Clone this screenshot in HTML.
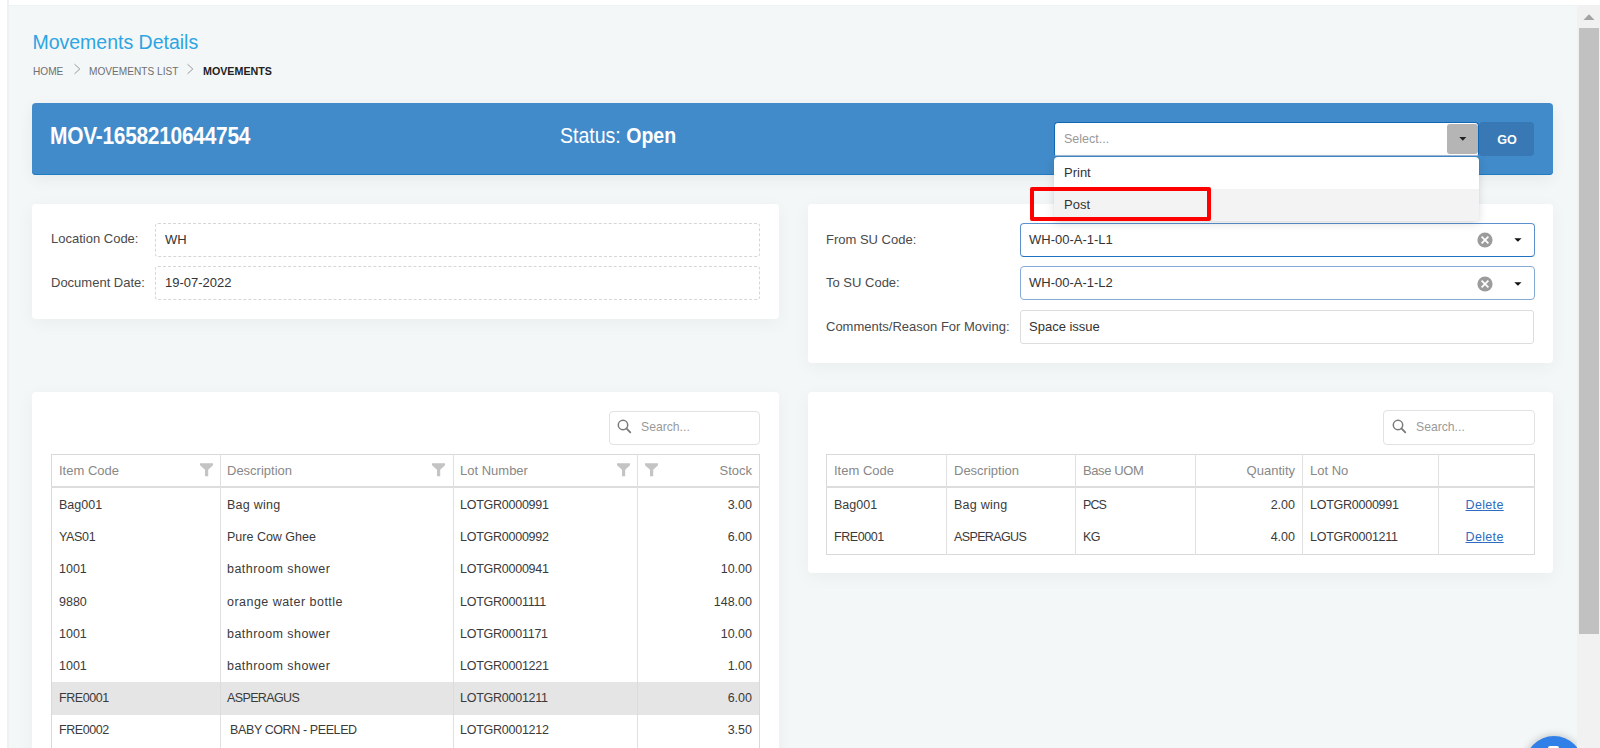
<!DOCTYPE html>
<html><head><meta charset="utf-8">
<style>
*{box-sizing:border-box;margin:0;padding:0}
html,body{width:1600px;height:748px;overflow:hidden}
body{position:relative;background:#f4f7f8;font-family:"Liberation Sans",sans-serif;color:#3a3a3a}
.abs{position:absolute}
.t{position:absolute;white-space:nowrap;line-height:1}
#lstrip{left:0;top:0;width:9px;height:748px;background:#fff;border-right:2px solid #eff0f2}
#tstrip{left:9px;top:0;width:1591px;height:5px;background:#fff;box-shadow:0 1px 1px rgba(0,0,0,.015)}
#sb{left:1577px;top:5px;width:23px;height:743px;background:#f1f1f1}
#sbthumb{left:1579px;top:28px;width:20px;height:606px;background:#c1c1c1}
.card{position:absolute;background:#fff;border-radius:4px;box-shadow:0 4px 18px rgba(0,0,0,.045)}
.title{left:32.4px;top:32.5px;font-size:19.5px;color:#2da5e2}
.bc{top:65.8px;font-size:11.5px;color:#6f6f6f;transform:scaleX(0.88);transform-origin:0 0}
#hdr{left:32px;top:103px;width:1521px;height:72px;background:#418bca;border-radius:4px;box-shadow:inset 0 -1px 0 #1f7bc4,0 4px 16px rgba(0,0,0,.06)}
.lbl{font-size:13px;color:#4a4a4a}
.inp{position:absolute;background:#fff;border-radius:3px}
.dash{border:1px dashed #d6d6d6}
.blue{border:1px solid #5d8fc9}
.gray{border:1px solid #ddd}
.val{font-size:13px;color:#333}
table{border-collapse:collapse;position:absolute}
</style></head><body>
<div id="lstrip" class="abs"></div>
<div id="tstrip" class="abs"></div>

<div class="t title">Movements Details</div>
<div class="t bc" style="left:32.5px">HOME</div>
<div class="t bc" style="left:89.2px">MOVEMENTS LIST</div>
<div class="t bc" style="left:203px;color:#222;font-weight:bold;transform:scaleX(0.93)">MOVEMENTS</div>

<div id="hdr" class="abs"></div>
<div class="t" style="left:50.2px;top:125px;font-size:23px;font-weight:bold;color:#fff;letter-spacing:-0.3px;transform:scaleX(0.91);transform-origin:0 0">MOV-1658210644754</div>
<div class="t" style="left:560px;top:125px;font-size:22.5px;color:#fff;transform:scaleX(0.868);transform-origin:0 0">Status: <b>Open</b></div>


<!-- select -->
<div class="abs" style="left:1054px;top:122px;width:425px;height:34px;background:#fff;border-radius:4px 4px 2px 2px;border:1px solid #1167b3;border-bottom-color:#a3b9d6"></div>
<div class="t" style="left:1064px;top:133px;font-size:12.5px;color:#999">Select...</div>
<div class="abs" style="left:1447px;top:124px;width:31px;height:30px;background:#b5b5b5;border-radius:3px"></div>
<svg class="abs" style="left:1458.5px;top:137px" width="8" height="4" viewBox="0 0 8 4"><path d="M0.3 0.1H7.3L3.8 3.7Z" fill="#222"/></svg>
<div class="abs" style="left:1479px;top:122px;width:55px;height:34px;background:#3778b5;border-radius:4px"></div>
<div class="t" style="left:1497.3px;top:133.5px;font-size:12.6px;color:#fff;font-weight:bold">GO</div>

<!-- card1 -->
<div class="card" style="left:32px;top:204px;width:747px;height:115px"></div>
<div class="t lbl" style="left:51px;top:232.3px">Location Code:</div>
<div class="inp dash" style="left:155px;top:223px;width:605px;height:34px"></div>
<div class="t val" style="left:165px;top:232.5px">WH</div>
<div class="t lbl" style="left:51px;top:276px">Document Date:</div>
<div class="inp dash" style="left:155px;top:266px;width:605px;height:34px"></div>
<div class="t val" style="left:165px;top:276px">19-07-2022</div>

<!-- card2 -->
<div class="card" style="left:808px;top:204px;width:745px;height:159px"></div>
<div class="t lbl" style="left:826px;top:233px">From SU Code:</div>
<div class="inp" style="left:1020px;top:223px;width:515px;height:34px;border:1px solid #5b90cf;border-bottom-color:#1f72c0;border-radius:4px"></div>
<div class="t val" style="left:1029px;top:233px">WH-00-A-1-L1</div>
<div class="t lbl" style="left:826px;top:276px">To SU Code:</div>
<div class="inp" style="left:1020px;top:266px;width:515px;height:34px;border:1px solid #86aad6;border-radius:4px"></div>
<div class="t val" style="left:1029px;top:276px">WH-00-A-1-L2</div>
<div class="t lbl" style="left:826px;top:320px">Comments/Reason For Moving:</div>
<div class="inp gray" style="left:1020px;top:310px;width:514px;height:34px"></div>
<div class="t val" style="left:1029px;top:320px">Space issue</div>

<!-- card3 -->
<div class="card" style="left:32px;top:392px;width:747px;height:400px"></div>
<!-- card4 -->
<div class="card" style="left:808px;top:392px;width:745px;height:181px"></div>


<!-- table1 -->
<div class="abs" style="left:608.5px;top:410.5px;width:151.5px;height:34.5px;border:1px solid #e2e2e2;border-radius:4px;background:#fff"></div>
<svg class="abs" style="left:617px;top:419px" width="15" height="15" viewBox="0 0 15 15"><circle cx="6" cy="6" r="4.7" fill="none" stroke="#7a7a7a" stroke-width="1.5"/><path d="M9.4 9.4L13.3 13.3" stroke="#7a7a7a" stroke-width="1.8" stroke-linecap="round"/></svg>
<div class="t" style="left:641px;top:421px;font-size:12.2px;color:#9a9a9a">Search...</div>
<div class="abs" style="left:51px;top:454px;width:709px;height:400px;border:1px solid #d9d9d9;border-bottom:none"></div>
<div class="abs" style="left:51px;top:486px;width:709px;height:2px;background:#dddddd"></div>
<div class="abs" style="left:220px;top:454px;width:1px;height:400px;background:#e0e0e0"></div>
<div class="abs" style="left:453px;top:454px;width:1px;height:400px;background:#e0e0e0"></div>
<div class="abs" style="left:637px;top:454px;width:1px;height:400px;background:#e0e0e0"></div>
<div class="abs" style="left:52px;top:682.2px;width:707px;height:32.4px;background:#e5e5e5"></div>
<div class="abs" style="left:220px;top:682.2px;width:1px;height:32.4px;background:#dcdcdc"></div>
<div class="abs" style="left:453px;top:682.2px;width:1px;height:32.4px;background:#dcdcdc"></div>
<div class="abs" style="left:637px;top:682.2px;width:1px;height:32.4px;background:#dcdcdc"></div>
<div class="t" style="left:59px;top:464px;font-size:13px;color:#888">Item Code</div>
<div class="t" style="left:227px;top:464px;font-size:13px;color:#888">Description</div>
<div class="t" style="left:460px;top:464px;font-size:13px;color:#888">Lot Number</div>
<div class="t" style="right:848px;top:464px;font-size:13px;color:#888">Stock</div>
<svg class="abs" style="left:200px;top:462.5px" width="14" height="14" viewBox="0 0 14 14"><path d="M0 0.3H13V2.3L8.2 6.8V13.3H5V6.8L0 2.3Z" fill="#c4c4c4"/></svg>
<svg class="abs" style="left:432px;top:462.5px" width="14" height="14" viewBox="0 0 14 14"><path d="M0 0.3H13V2.3L8.2 6.8V13.3H5V6.8L0 2.3Z" fill="#c4c4c4"/></svg>
<svg class="abs" style="left:617px;top:462.5px" width="14" height="14" viewBox="0 0 14 14"><path d="M0 0.3H13V2.3L8.2 6.8V13.3H5V6.8L0 2.3Z" fill="#c4c4c4"/></svg>
<svg class="abs" style="left:645px;top:462.5px" width="14" height="14" viewBox="0 0 14 14"><path d="M0 0.3H13V2.3L8.2 6.8V13.3H5V6.8L0 2.3Z" fill="#c4c4c4"/></svg>
<div class="t" style="left:59px;top:499.0px;font-size:12.5px">Bag001</div>
<div class="t" style="left:227px;top:499.0px;font-size:12.5px;letter-spacing:0.25px">Bag wing</div>
<div class="t" style="left:460px;top:499.0px;font-size:12.5px;letter-spacing:-0.25px">LOTGR0000991</div>
<div class="t" style="right:848px;top:499.0px;font-size:12.5px">3.00</div>
<div class="t" style="left:59px;top:531.2px;font-size:12.5px;letter-spacing:-0.35px">YAS01</div>
<div class="t" style="left:227px;top:531.2px;font-size:12.5px">Pure Cow Ghee</div>
<div class="t" style="left:460px;top:531.2px;font-size:12.5px;letter-spacing:-0.25px">LOTGR0000992</div>
<div class="t" style="right:848px;top:531.2px;font-size:12.5px">6.00</div>
<div class="t" style="left:59px;top:563.4px;font-size:12.5px">1001</div>
<div class="t" style="left:227px;top:563.4px;font-size:12.5px;letter-spacing:0.45px">bathroom shower</div>
<div class="t" style="left:460px;top:563.4px;font-size:12.5px;letter-spacing:-0.25px">LOTGR0000941</div>
<div class="t" style="right:848px;top:563.4px;font-size:12.5px">10.00</div>
<div class="t" style="left:59px;top:595.6px;font-size:12.5px">9880</div>
<div class="t" style="left:227px;top:595.6px;font-size:12.5px;letter-spacing:0.47px">orange water bottle</div>
<div class="t" style="left:460px;top:595.6px;font-size:12.5px;letter-spacing:-0.25px">LOTGR0001111</div>
<div class="t" style="right:848px;top:595.6px;font-size:12.5px">148.00</div>
<div class="t" style="left:59px;top:627.8px;font-size:12.5px">1001</div>
<div class="t" style="left:227px;top:627.8px;font-size:12.5px;letter-spacing:0.45px">bathroom shower</div>
<div class="t" style="left:460px;top:627.8px;font-size:12.5px;letter-spacing:-0.25px">LOTGR0001171</div>
<div class="t" style="right:848px;top:627.8px;font-size:12.5px">10.00</div>
<div class="t" style="left:59px;top:660.0px;font-size:12.5px">1001</div>
<div class="t" style="left:227px;top:660.0px;font-size:12.5px;letter-spacing:0.45px">bathroom shower</div>
<div class="t" style="left:460px;top:660.0px;font-size:12.5px;letter-spacing:-0.25px">LOTGR0001221</div>
<div class="t" style="right:848px;top:660.0px;font-size:12.5px">1.00</div>
<div class="t" style="left:59px;top:692.2px;font-size:12.5px;letter-spacing:-0.43px">FRE0001</div>
<div class="t" style="left:227px;top:692.2px;font-size:12.5px;letter-spacing:-0.62px">ASPERAGUS</div>
<div class="t" style="left:460px;top:692.2px;font-size:12.5px;letter-spacing:-0.25px">LOTGR0001211</div>
<div class="t" style="right:848px;top:692.2px;font-size:12.5px">6.00</div>
<div class="t" style="left:59px;top:724.4px;font-size:12.5px;letter-spacing:-0.43px">FRE0002</div>
<div class="t" style="left:227px;top:724.4px;font-size:12.5px;letter-spacing:-0.4px">&nbsp;BABY CORN - PEELED</div>
<div class="t" style="left:460px;top:724.4px;font-size:12.5px;letter-spacing:-0.25px">LOTGR0001212</div>
<div class="t" style="right:848px;top:724.4px;font-size:12.5px">3.50</div>
<!-- table2 -->
<div class="abs" style="left:1383.3px;top:410.3px;width:151.5px;height:34.5px;border:1px solid #e2e2e2;border-radius:4px;background:#fff"></div>
<svg class="abs" style="left:1392px;top:419px" width="15" height="15" viewBox="0 0 15 15"><circle cx="6" cy="6" r="4.7" fill="none" stroke="#7a7a7a" stroke-width="1.5"/><path d="M9.4 9.4L13.3 13.3" stroke="#7a7a7a" stroke-width="1.8" stroke-linecap="round"/></svg>
<div class="t" style="left:1416px;top:421px;font-size:12.2px;color:#9a9a9a">Search...</div>
<div class="abs" style="left:826px;top:454px;width:709px;height:101px;border:1px solid #d9d9d9"></div>
<div class="abs" style="left:826px;top:486px;width:709px;height:2px;background:#dddddd"></div>
<div class="abs" style="left:946px;top:454px;width:1px;height:101px;background:#e0e0e0"></div>
<div class="abs" style="left:1075px;top:454px;width:1px;height:101px;background:#e0e0e0"></div>
<div class="abs" style="left:1195px;top:454px;width:1px;height:101px;background:#e0e0e0"></div>
<div class="abs" style="left:1302px;top:454px;width:1px;height:101px;background:#e0e0e0"></div>
<div class="abs" style="left:1438px;top:454px;width:1px;height:101px;background:#e0e0e0"></div>
<div class="t" style="left:834px;top:464px;font-size:13px;color:#888">Item Code</div>
<div class="t" style="left:954px;top:464px;font-size:13px;color:#888">Description</div>
<div class="t" style="left:1083px;top:464px;font-size:13px;color:#888;letter-spacing:-0.4px">Base UOM</div>
<div class="t" style="right:305px;top:464px;font-size:13px;color:#888">Quantity</div>
<div class="t" style="left:1310px;top:464px;font-size:13px;color:#888">Lot No</div>
<div class="t" style="left:834px;top:499.0px;font-size:12.5px">Bag001</div>
<div class="t" style="left:954px;top:499.0px;font-size:12.5px;letter-spacing:0.25px">Bag wing</div>
<div class="t" style="left:1083px;top:499.0px;font-size:12.5px;letter-spacing:-0.9px">PCS</div>
<div class="t" style="right:305px;top:499.0px;font-size:12.5px">2.00</div>
<div class="t" style="left:1310px;top:499.0px;font-size:12.5px;letter-spacing:-0.25px">LOTGR0000991</div>
<div class="t" style="left:1465.5px;top:499.0px;font-size:12.5px;color:#2d6cc0;text-decoration:underline;letter-spacing:0.35px">Delete</div>
<div class="t" style="left:834px;top:531.2px;font-size:12.5px;letter-spacing:-0.43px">FRE0001</div>
<div class="t" style="left:954px;top:531.2px;font-size:12.5px;letter-spacing:-0.62px">ASPERAGUS</div>
<div class="t" style="left:1083px;top:531.2px;font-size:12.5px;letter-spacing:-0.5px">KG</div>
<div class="t" style="right:305px;top:531.2px;font-size:12.5px">4.00</div>
<div class="t" style="left:1310px;top:531.2px;font-size:12.5px;letter-spacing:-0.25px">LOTGR0001211</div>
<div class="t" style="left:1465.5px;top:531.2px;font-size:12.5px;color:#2d6cc0;text-decoration:underline;letter-spacing:0.35px">Delete</div>

<!-- dropdown menu -->
<div class="abs" style="left:1054px;top:157px;width:425px;height:64px;background:#fff;border-radius:4px;box-shadow:0 3px 10px rgba(0,0,0,.13),0 0 1px rgba(0,0,0,.15);overflow:hidden">
  <div style="position:absolute;left:0;top:32px;width:425px;height:32px;background:#f3f3f3"></div>
</div>
<div class="t" style="left:1064px;top:166px;font-size:13px;color:#333">Print</div>
<div class="t" style="left:1064px;top:197.5px;font-size:13px;color:#333">Post</div>
<div class="abs" style="left:1030px;top:187px;width:181px;height:34px;border:4px solid #ff0000;border-radius:2px"></div>


<!-- breadcrumb chevrons -->
<svg class="abs" style="left:73px;top:63px" width="9" height="12" viewBox="0 0 9 12"><path d="M1.5 1.2L6.8 6L1.5 10.8" fill="none" stroke="#9a9a9a" stroke-width="1"/></svg>
<svg class="abs" style="left:186px;top:63px" width="9" height="12" viewBox="0 0 9 12"><path d="M1.5 1.2L6.8 6L1.5 10.8" fill="none" stroke="#9a9a9a" stroke-width="1"/></svg>
<!-- su icons -->
<svg class="abs" style="left:1477px;top:231.5px" width="16" height="16" viewBox="0 0 16 16"><circle cx="8" cy="8" r="7.6" fill="#9c9c9c"/><path d="M4.6 4.6L11.4 11.4M11.4 4.6L4.6 11.4" stroke="#fff" stroke-width="1.7"/></svg>
<svg class="abs" style="left:1477px;top:275.5px" width="16" height="16" viewBox="0 0 16 16"><circle cx="8" cy="8" r="7.6" fill="#9c9c9c"/><path d="M4.6 4.6L11.4 11.4M11.4 4.6L4.6 11.4" stroke="#fff" stroke-width="1.7"/></svg>
<svg class="abs" style="left:1514px;top:238px" width="8" height="4" viewBox="0 0 8 4"><path d="M0.3 0.2H7.5L3.9 3.8Z" fill="#111"/></svg>
<svg class="abs" style="left:1514px;top:282px" width="8" height="4" viewBox="0 0 8 4"><path d="M0.3 0.2H7.5L3.9 3.8Z" fill="#111"/></svg>
<!-- chat bubble -->
<div class="abs" style="left:1525px;top:736px;width:58px;height:58px;border-radius:50%;background:#3180e8;box-shadow:0 0 8px rgba(0,0,0,.25)"></div>
<div class="abs" style="left:1548px;top:746px;width:11px;height:4px;background:#fff;border-radius:2px 2px 0 0"></div>
<div id="sb" class="abs"></div>
<div id="sbthumb" class="abs"></div>
<!-- scroll arrow -->
<svg class="abs" style="left:1583px;top:13px" width="12" height="8" viewBox="0 0 12 8"><path d="M0.5 7H11.5L6 1.2Z" fill="#a3a3a3"/></svg>
</body></html>
